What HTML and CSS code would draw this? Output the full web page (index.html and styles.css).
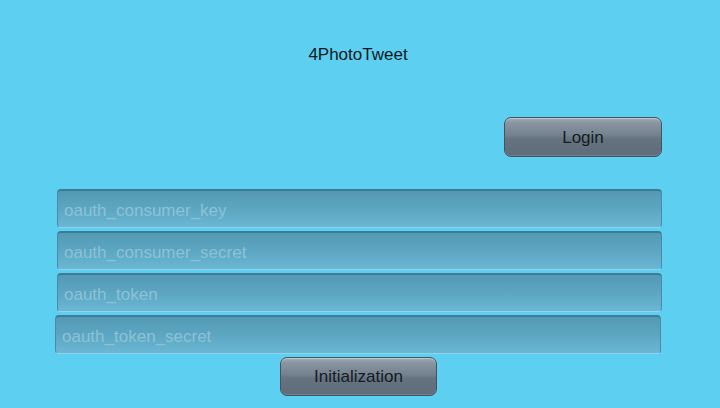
FILE: index.html
```html
<!DOCTYPE html>
<html>
<head>
<meta charset="utf-8">
<link rel="stylesheet" href="styles.css">
</head>
<body>
<div class="app">
  <div class="title">4PhotoTweet</div>
  <div class="login-row">
    <button class="btn btn-login">Login</button>
  </div>
  <div class="fields">
    <div class="field"><span class="ph">oauth_consumer_key</span></div>
    <div class="field"><span class="ph">oauth_consumer_secret</span></div>
    <div class="field"><span class="ph">oauth_token</span></div>
    <div class="field field-shift"><span class="ph">oauth_token_secret</span></div>
  </div>
  <div class="init-row">
    <button class="btn btn-init">Initialization</button>
  </div>
</div>
</body>
</html>
```
FILE: styles.css
```css
html, body {
  margin: 0;
  padding: 0;
  background: #5dcff0;
  width: 720px;
  height: 408px;
  overflow: hidden;
  font-family: "Liberation Sans", Arial, sans-serif;
}
.app {
  display: flex;
  flex-direction: column;
}
.title {
  margin-top: 45px;
  height: 20px;
  line-height: 20px;
  font-size: 17px;
  color: #0e1a20;
  text-align: center;
  padding-left: 78px;
  width: 560px;
}
.login-row {
  display: flex;
  justify-content: flex-end;
  padding-right: 58px;
  margin-top: 52px;
}
.btn {
  box-sizing: border-box;
  border: 1px solid #46525e;
  border-radius: 7px;
  font-family: "Liberation Sans", Arial, sans-serif;
  font-size: 17px;
  color: #161b22;
  background: linear-gradient(to bottom, #a3adb8 0%, #8a96a2 12%, #74818e 45%, #65727f 55%, #5f6c79 100%);
  box-shadow: inset 0 1px 0 rgba(255,255,255,0.35), inset 0 -1px 0 rgba(255,255,255,0.15);
  padding: 1px 0 0 0;
  margin: 0;
}
.btn-login {
  width: 158px;
  height: 40px;
}
.fields {
  display: flex;
  flex-direction: column;
  gap: 3px;
  margin-top: 32px;
  padding-left: 57px;
}
.field {
  box-sizing: border-box;
  width: 605px;
  height: 39px;
  border-radius: 4px;
  border-top: 2px solid #3b7c96;
  border-left: 1px solid #4a8ca6;
  border-right: 1px solid #4a8ca6;
  border-bottom: 1px solid #8fd4ea;
  background: linear-gradient(to bottom, #5499b4 0%, #5da6c2 50%, #6ab7d4 100%);
  display: flex;
  align-items: center;
  padding-left: 6px;
  padding-top: 3px;
}
.field-shift {
  margin-left: -2px;
  width: 606px;
}
.ph {
  font-size: 17px;
  color: #8cc2d6;
}
.init-row {
  display: flex;
  padding-left: 280px;
  margin-top: 3px;
}
.btn-init {
  width: 157px;
  height: 39px;
}
```
